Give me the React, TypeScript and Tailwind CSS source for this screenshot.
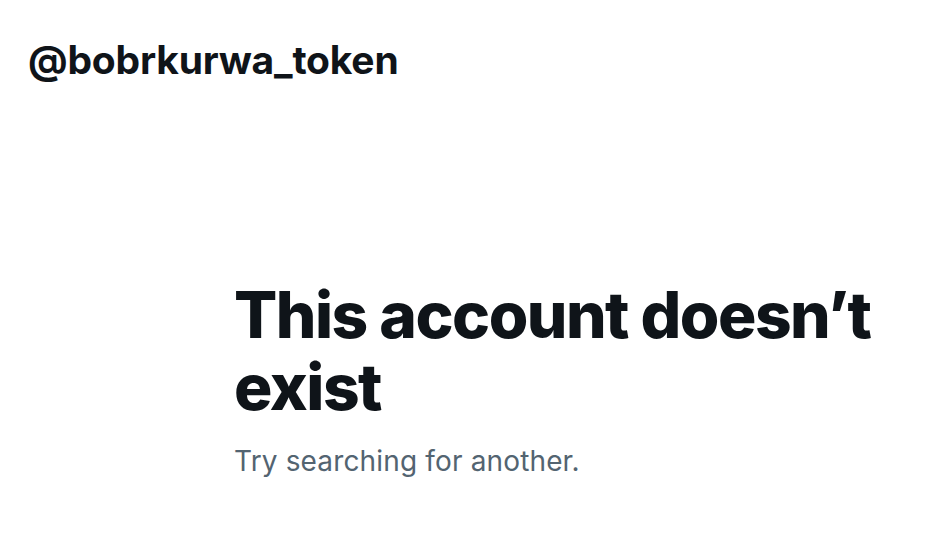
import React from 'react';

const App = () => {
  return (
    <div className="w-[942px] h-[550px] bg-white flex flex-col font-['Inter',sans-serif] text-[#0f1419] overflow-hidden">
      <header className="pl-[28px] pt-[37px]">
        <h1 className="text-[39px] leading-[46px] font-bold tracking-[-0.2px]">@bobrkurwa_token</h1>
      </header>

      <main className="pl-[234px] pt-[196px] pr-4">
        <h2 className="text-[64px] leading-[72px] font-extrabold tracking-[-1.5px]">
          This account doesn’t exist
        </h2>
        <p className="mt-[20px] text-[28px] leading-[36px] tracking-[0.15px] text-[#536471]">Try searching for another.</p>
      </main>
    </div>
  );
};

export default App;
